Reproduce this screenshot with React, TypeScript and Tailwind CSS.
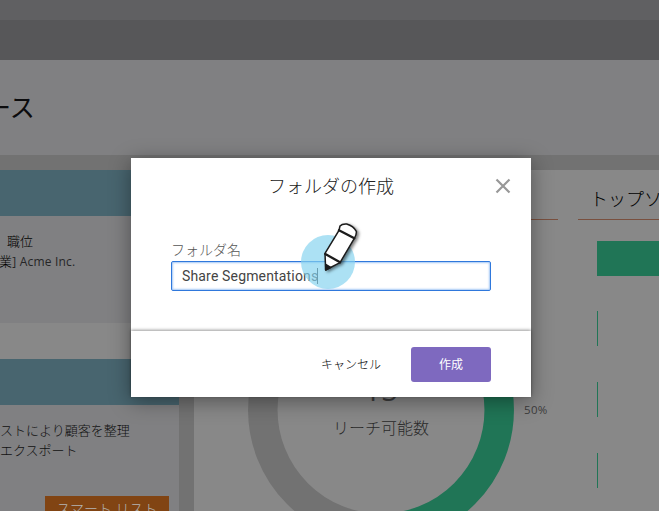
import type { ReactNode } from "react";

const jp = "font-['Open_Sans','Noto_Sans_CJK_JP',sans-serif]";

function Card({ className = "", children }: { className?: string; children: ReactNode }) {
  return (
    <section className={`flex shrink-0 flex-col bg-[#808082] ${className}`}>
      <div className="h-[46px] shrink-0 bg-[#48656f]" />
      {children}
    </section>
  );
}

function Donut() {
  return (
    <svg className="absolute left-[54px] top-[107px]" width="266" height="266" viewBox="0 0 266 266" fill="none" strokeWidth="29.5">
      <path d="M133 14.75a118.25 118.25 0 0 0 0 236.5" stroke="#727272" />
      <path d="M133 14.75a118.25 118.25 0 0 1 0 236.5" stroke="#207556" />
    </svg>
  );
}

function Pencil() {
  return (
    <svg className="absolute left-[159px] top-[52px]" width="80" height="90" viewBox="0 0 240 270">
      <defs>
        <filter id="shade" x="-20%" y="-20%" width="150%" height="150%">
          <feDropShadow dx="6" dy="4" stdDeviation="4" floodOpacity="0.5" />
        </filter>
      </defs>
      <circle cx="114" cy="156" r="81" fill="#85d3ef" fillOpacity="0.68" />
      <g filter="url(#shade)" stroke="#1b1b1b" strokeWidth="4.5" strokeLinejoin="round" strokeLinecap="round">
        <path d="M105 130 L147 61 L150 48 Q156 41 170 42 Q191 48 199 64 Q200 74 193 85 L150 158 L107 180 Z" fill="#fff" />
        <path d="M147 61 L193 85 M106 132 L150 157" strokeWidth="7" />
        <path d="M107 163 L122 172 L107 180 Z" fill="#1b1b1b" />
      </g>
    </svg>
  );
}

function Modal() {
  return (
    <div role="dialog" className="absolute left-[131px] top-[158px] flex h-[239px] w-[400px] flex-col bg-white shadow-[0_4px_20px_rgba(0,0,0,0.4)]">
      <div className="flex h-[173px] flex-col px-10">
        <header className="relative flex h-[57px] items-center justify-center text-[18px] font-light text-[#222]">
          <h2>フォルダの作成</h2>
          <svg className="absolute -right-[20px] top-[20px]" width="16" height="16" viewBox="0 0 16 16" stroke="#989898" strokeWidth="2.2">
            <path d="M1.5 1.5l13 13M14.5 1.5l-13 13" />
          </svg>
        </header>
        <label className="mt-[24px] h-[22px] text-[14px] font-light leading-[22px] text-[#555]">フォルダ名</label>
        <div className="flex h-[30px] shrink-0 items-center rounded-[2px] border border-[#2f78dc] pl-[10px] font-['Roboto',sans-serif] text-[14px] tracking-[0.16px] text-[#444] shadow-[inset_0_0_2px_1px_#a5c8f5]">
          Share Segmentations
          <span className="-ml-px h-4 w-px bg-[#333]" />
        </div>
      </div>
      <footer className="flex flex-1 items-center justify-end pr-10 text-[12px] shadow-[0_-1px_3px_rgba(0,0,0,0.4)]">
        <span className="mr-[30px] pt-[2px] font-light text-black">キャンセル</span>
        <button className="h-[35px] w-20 rounded-[3px] bg-[#7e69bf] pt-[2px] text-white">作成</button>
      </footer>
      <Pencil />
    </div>
  );
}

export default function App() {
  return (
    <div className={`relative flex h-[511px] w-[659px] flex-col overflow-hidden bg-[#727272] ${jp}`}>
      <div className="h-5 shrink-0 bg-[#606062]" />
      <div className="h-10 shrink-0 bg-[#575759]" />
      <header className="flex h-[95px] shrink-0 items-center bg-[#808082]">
        <h1 className="-ml-[14px] whitespace-nowrap pt-px text-[25px] text-[#0c0c0e]">ース</h1>
      </header>
      <main className="mt-[15px] flex h-[341px] gap-[15px]">
        <div className="flex w-[179px] shrink-0 flex-col gap-9 overflow-hidden bg-[#888]">
          <Card className="h-[153px]">
            <div className="pt-[15px] text-[13px] leading-5 text-[#262627]">
              <p className="pl-[7px] font-light text-black">職位</p>
              <p className="-ml-[1px] text-[12px] tracking-[0.2px]"><span className="text-[13px] font-light text-black">業</span>] Acme Inc.</p>
            </div>
          </Card>
          <Card className="h-[152px]">
            <div className="whitespace-nowrap pt-[15px] text-[13px] font-light leading-5 text-[#111]">
              <p>ストにより顧客を整理</p>
              <p>エクスポート</p>
            </div>
            <div className="ml-[45px] mt-[36px] flex h-[30px] w-[124px] shrink-0 items-start justify-center bg-[#814413] text-[14px] font-light leading-[26px] text-[#b4b4b4]">スマート リスト</div>
          </Card>
        </div>
        <div className="relative flex flex-1 overflow-hidden bg-[#888]">
          <section className="flex w-[364px] shrink-0 flex-col">
            <div className="h-[50px] shrink-0 border-b border-[#79503f]" />
            <Donut />
            <div className="relative flex flex-col pl-[140px] pt-[153px] text-[#3c3c3c]">
              <p className="-mb-[5px] w-[94px] text-center text-[30px] leading-[34px]">15</p>
              <div className="flex h-4 items-center text-[11.5px] tracking-[0.3px]"><span className="ml-[190px]">50%</span></div>
              <p className="-ml-px w-[94px] whitespace-nowrap text-[16px] font-light leading-5 text-[#2a2a2a]">リーチ可能数</p>
            </div>
          </section>
          <section className="ml-5 flex w-[100px] shrink-0 flex-col">
            <h2 className="h-[50px] shrink-0 whitespace-nowrap border-b border-[#79503f] pl-[12px] pt-[17px] text-[18px] font-light leading-[24px] text-black">トップソ</h2>
            <div className="mt-[21px] flex flex-col gap-9 pl-[19px]">
              <div className="-mb-px h-[35px] bg-[#207556]" />
              <div className="h-[35px] w-px bg-[#207556]" />
              <div className="h-[35px] w-px bg-[#207556]" />
              <div className="h-[35px] w-px bg-[#207556]" />
            </div>
          </section>
        </div>
      </main>
      <Modal />
    </div>
  );
}
